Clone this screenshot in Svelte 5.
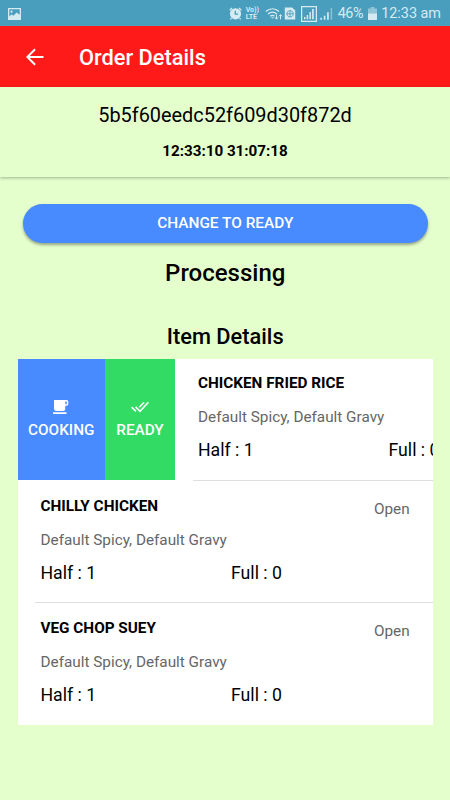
<script>
	let order = {
		id: '5b5f60eedc52f609d30f872d',
		time: '12:33:10 31:07:18',
		status: 'Processing'
	};

	let items = $state([
		{ name: 'CHICKEN FRIED RICE', note: 'Default Spicy, Default Gravy', half: 1, full: 0, status: 'Open', swiped: true },
		{ name: 'CHILLY CHICKEN', note: 'Default Spicy, Default Gravy', half: 1, full: 0, status: 'Open', swiped: false },
		{ name: 'VEG CHOP SUEY', note: 'Default Spicy, Default Gravy', half: 1, full: 0, status: 'Open', swiped: false }
	]);

	function setStatus(item, status) {
		item.status = status;
		item.swiped = false;
	}
</script>

<div class="screen">
	<div class="statusbar">
		<svg class="photo" width="13" height="12" viewBox="0 0 13 12">
			<path fill-rule="evenodd" d="M0 0h13v12H0zM1.3 1.3v7.5l2.4-2.6 1.8 1.5 3-3.1 3.2 2.2V1.3zM3.6 2.6a1.1 1.1 0 1 1 0 2.2 1.1 1.1 0 0 1 0-2.2z" />
		</svg>
		<div class="indicators">
			<!-- alarm -->
			<svg width="13" height="13" viewBox="0 0 13 13">
				<circle cx="6.5" cy="6.8" r="5.6" />
				<path class="line" d="M.7 3.2 3 1M12.3 3.2 10 1M2.4 11.2l-1 1.2M10.6 11.2l1 1.2" />
				<path class="cut" d="M6.3 3.8v3.3h2.8" />
			</svg>
			<div class="volte"><span>Vo))</span><span>LTE</span></div>
			<!-- wifi with traffic arrows -->
			<svg class="wifi" width="18" height="13" viewBox="0 0 18 13">
				<path class="line" d="M.8 4.4c4-3.5 9.2-3.5 13.2 0M3 6.9c2.8-2.3 6-2.3 8.8 0M5.2 9.2c1.4-1.1 3-1.1 4.3 0" />
				<path d="M6 10.2h2.8l-1.4 1.5z" />
				<path class="thin" d="M11.5 7.5V12M10 10.5l1.5 1.7 1.5-1.7M15.5 12.3V7.8M14 9.3l1.5-1.7L17 9.3" />
			</svg>
			<!-- sim -->
			<svg class="sim" width="12" height="13" viewBox="0 0 12 13">
				<path d="M.8.4h7.4l3 3v9.2H.8z" />
				<path class="cut small" d="M6 3.6a3.2 3.2 0 1 0 .1 0zM2.8 6.8h6.4M6 3.6V10" />
			</svg>
			<!-- signal, active sim -->
			<svg class="boxed" width="16" height="16" viewBox="0 0 16 16">
				<path class="line" d="M.6.6h14.8v14.8H.6z" />
				<path d="M3 11h1.5v2.3H3zM5.7 9h1.5v4.3H5.7zM8.4 6h1.5v7.3H8.4zM11.1 3h1.7v10.3h-1.7z" />
			</svg>
			<svg class="signal" width="13" height="13" viewBox="0 0 13 13">
				<path d="M.3 10.7h1.6v2H.3zM3.8 8.7h1.6v4H3.8zM7.1 5.2h1.7v7.5H7.1z" />
				<path class="dim" d="M10.7 1h1.4v11.7h-1.4z" />
			</svg>
			<span class="percent">46%</span>
			<svg class="battery" width="9" height="13" viewBox="0 0 9 13">
				<path class="dim" d="M2.7 0h3.6v1.5H9v4.8H0V1.5h2.7z" />
				<path d="M0 6.3h9V13H0z" />
			</svg>
			<span class="clock">12:33 am</span>
		</div>
	</div>

	<header class="toolbar">
		<button class="back" aria-label="Back">
			<svg width="18" height="18" viewBox="0 0 18 18">
				<path d="M17.5 9H1.6M9.1 1.2 1.3 9l7.8 7.8" />
			</svg>
		</button>
		<h1>Order Details</h1>
	</header>

	<section class="order">
		<div class="order-id">{order.id}</div>
		<div class="order-time">{order.time}</div>
	</section>

	<main>
		<button class="change">CHANGE TO READY</button>
		<h2 class="state">{order.status}</h2>
		<h3>Item Details</h3>

		<div class="list">
			{#each items as item}
				<div class="row">
					{#if item.swiped}
						<div class="options">
							<button class="cooking" onclick={() => setStatus(item, 'Cooking')}>
								<svg width="16" height="14" viewBox="0 0 16 14">
									<path fill-rule="evenodd" d="M1 0h12.5a1.7 1.7 0 0 1 1.8 1.7v2.4a1.7 1.7 0 0 1-1.8 1.7h-1.2v2.7a2.5 2.5 0 0 1-2.5 2.5H3.5A2.5 2.5 0 0 1 1 8.5zM12.3 1.6v2.7h1.5V1.6zM0 12.3h13.5V14H0z" />
								</svg>
								COOKING
							</button>
							<button class="ready" onclick={() => setStatus(item, 'Ready')}>
								<svg width="18" height="14" viewBox="0 -1 18 14">
									<path class="tick" d="M.6 6.1l4.3 4.3M4.6 5.9 9 10.4l8.4-9.2M8.3 6.3l4.8-5.1" />
								</svg>
								READY
							</button>
						</div>
					{/if}
					<div class="item">
						<div class="inner">
							<div class="label">
								<div class="name">{item.name}</div>
								<div class="note">{item.note}</div>
								<div class="counts">
									<span>Half : {item.half}</span>
									<span>Full : {item.full}</span>
								</div>
							</div>
							{#if !item.swiped}
								<div class="item-status">{item.status}</div>
							{/if}
						</div>
					</div>
				</div>
			{/each}
		</div>
	</main>
</div>

<style>
	:global(body) {
		margin: 0;
		background: #e5ffcc;
	}
	.screen {
		width: 450px;
		height: 800px;
		overflow: hidden;
		background: #e5ffcc;
		color: #000;
		font-family: Roboto, sans-serif;
	}
	button {
		border: 0;
		padding: 0;
		font-family: inherit;
		color: #fff;
		cursor: pointer;
	}
	svg {
		display: block;
		flex: none;
	}

	.statusbar {
		display: flex;
		align-items: center;
		justify-content: space-between;
		box-sizing: border-box;
		height: 26px;
		padding: 1px 9px 0 8px;
		background: #4a9ebd;
		color: #d5eaf1;
		fill: #d5eaf1;
	}
	.indicators {
		display: flex;
		align-items: center;
		font-size: 14.4px;
		line-height: 26px;
	}
	.line {
		fill: none;
		stroke: #d5eaf1;
		stroke-width: 1.3;
	}
	.thin {
		fill: none;
		stroke: #d5eaf1;
		stroke-width: 1;
	}
	.cut {
		fill: none;
		stroke: #4a9ebd;
		stroke-width: 1.3;
	}
	.cut.small {
		stroke-width: 0.9;
	}
	.dim {
		opacity: 0.5;
	}
	.volte {
		display: flex;
		flex-direction: column;
		width: 13px;
		margin-left: 4px;
		font-size: 7px;
		font-weight: 700;
		line-height: 7px;
	}
	.wifi {
		margin-left: 6px;
	}
	.sim {
		margin-left: 1px;
	}
	.boxed {
		margin-left: 5px;
	}
	.signal {
		margin-left: 3px;
	}
	.percent {
		margin-left: 5px;
		letter-spacing: -0.4px;
	}
	.battery {
		margin-left: 5px;
	}
	.clock {
		margin-left: 4px;
	}

	.toolbar {
		display: flex;
		align-items: center;
		height: 61px;
		background: #ff1a1a;
		color: #fff;
	}
	.back {
		margin: 0 35px 0 26px;
		background: none;
	}
	.back path {
		fill: none;
		stroke: #fff;
		stroke-width: 2;
	}
	h1 {
		margin: 1px 0 0;
		font-size: 21.8px;
		font-weight: 500;
	}

	.order {
		box-sizing: border-box;
		height: 90px;
		padding-top: 16px;
		text-align: center;
		box-shadow: 0 1px 3px rgba(0, 0, 0, 0.3);
	}
	.order-id {
		font-size: 19.9px;
		line-height: 26px;
	}
	.order-time {
		margin-top: 12px;
		font-size: 15.2px;
		font-weight: 700;
		line-height: 20px;
	}

	main {
		display: flex;
		flex-direction: column;
		padding: 27px 17px 0 17.5px;
		text-align: center;
	}
	.change {
		height: 39px;
		margin: 0 5.5px;
		padding-bottom: 2px;
		border-radius: 20px;
		background: #488aff;
		box-shadow: 0 2px 3px rgba(0, 0, 0, 0.35);
		font-size: 15.4px;
		font-weight: 500;
	}
	.state {
		margin: 14px 0 0;
		font-size: 24px;
		font-weight: 500;
		line-height: 32px;
	}
	h3 {
		margin: 34px 0 0;
		font-size: 21.8px;
		font-weight: 500;
		line-height: 28px;
	}

	.list {
		margin-top: 7.6px;
		overflow: hidden;
		background: #fff;
		text-align: left;
	}
	.row {
		display: flex;
		height: 122.3px;
	}
	.options {
		display: flex;
		flex: none;
		width: 157.5px;
		height: 121.5px;
	}
	.options button {
		display: flex;
		flex-direction: column;
		align-items: center;
		justify-content: center;
		gap: 6px;
		padding-top: 2px;
		font-size: 15.3px;
		font-weight: 500;
		line-height: 20px;
	}
	.options svg {
		fill: #fff;
	}
	.options .cooking {
		width: 87.5px;
		background: #488aff;
	}
	.options .ready {
		width: 70px;
		background: #32db64;
	}
	.options .tick {
		fill: none;
		stroke: #fff;
		stroke-width: 1.6;
	}
	.item {
		flex: none;
		box-sizing: border-box;
		width: 415.5px;
		padding-left: 17.5px;
	}
	.inner {
		display: flex;
		box-sizing: border-box;
		height: 100%;
		padding: 14.7px 23px 0 5.5px;
		border-bottom: 1px solid #dedede;
	}
	.row:last-child .inner {
		border-bottom: 0;
	}
	.label {
		flex: 1;
		min-width: 0;
	}
	.name {
		font-size: 15.3px;
		font-weight: 700;
		line-height: 20px;
	}
	.note {
		margin-top: 14px;
		color: #666;
		font-size: 15.3px;
		line-height: 20px;
	}
	.counts {
		display: flex;
		margin-top: 11px;
		font-size: 17.7px;
		line-height: 24px;
	}
	.counts span {
		flex: none;
		width: 190.5px;
		white-space: nowrap;
	}
	.item-status {
		flex: none;
		width: 36px;
		margin-top: 3px;
		color: #666;
		font-size: 15.3px;
		line-height: 20px;
	}
</style>
